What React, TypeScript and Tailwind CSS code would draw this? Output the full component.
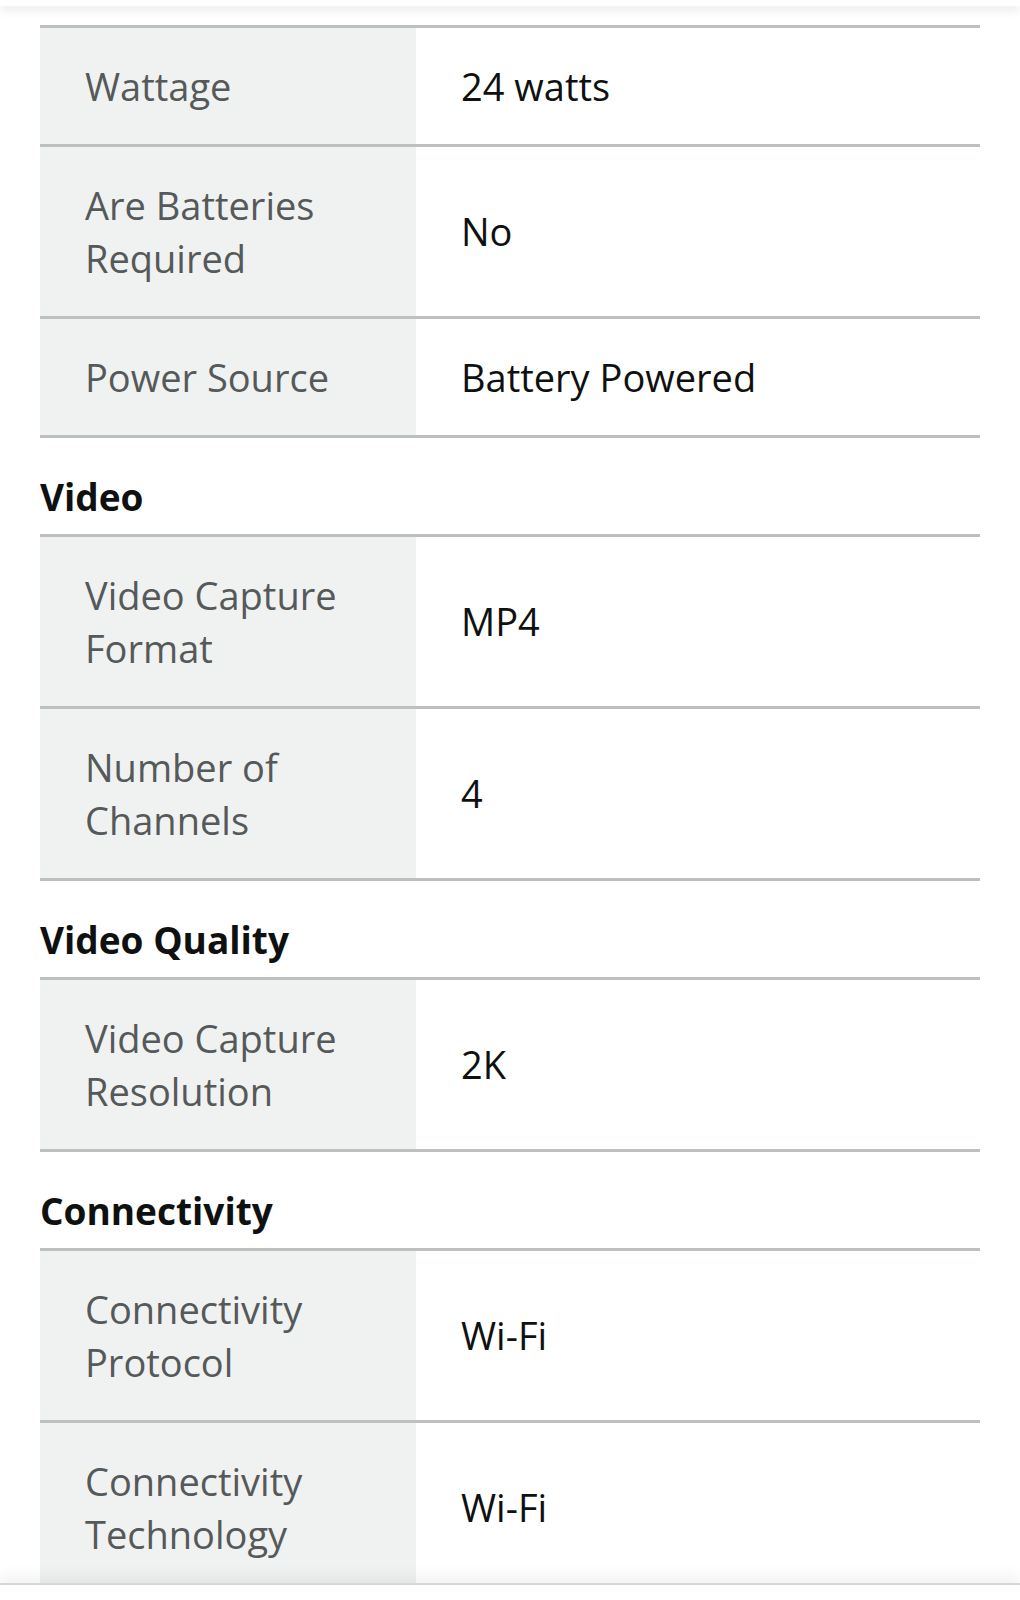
const sections: { title?: string; rows: [string, string][] }[] = [
  {
    rows: [
      ["Wattage", "24 watts"],
      ["Are Batteries Required", "No"],
      ["Power Source", "Battery Powered"],
    ],
  },
  {
    title: "Video",
    rows: [
      ["Video Capture Format", "MP4"],
      ["Number of Channels", "4"],
    ],
  },
  {
    title: "Video Quality",
    rows: [["Video Capture Resolution", "2K"]],
  },
  {
    title: "Connectivity",
    rows: [
      ["Connectivity Protocol", "Wi-Fi"],
      ["Connectivity Technology", "Wi-Fi"],
    ],
  },
];

const SpecRow = ({ label, value }: { label: string; value: string }) => (
  <div className="flex border-b-[3px] border-[#bdc0c0]">
    <div className="w-[376px] shrink-0 bg-[#f0f2f2] pl-[45px] pr-[50px] pt-[32px] pb-[31px] text-[#565959] text-[38px] leading-[53px]">
      {label}
    </div>
    <div className="flex-1 flex items-center pl-[45px] pr-4 text-[#0f1111] text-[38px] leading-[53px]">
      {value}
    </div>
  </div>
);

export default function App() {
  return (
    <div className="min-h-[1600px] bg-white" style={{ fontFamily: '"Open Sans", "Noto Sans", sans-serif' }}>
      {/* header overlay, with the scrolled-off "Power" title peeking out */}
      <div className="fixed top-0 left-0 right-0 h-[6px] bg-white/90 overflow-hidden shadow-[0_4px_10px_rgba(0,0,0,0.10)] z-10">
        <div className="pl-[40px] -mt-[34px] text-[37px] leading-[40px] font-bold text-[#c9cbcb]">Power</div>
      </div>

      <div className="px-[40px] pt-[25px] pb-[40px]">
        {sections.map((s, i) => (
          <div key={i}>
            {s.title && (
              <h2 className="pt-[38px] pb-[16px] text-[37px] leading-[42px] font-bold text-[#0f1111]">{s.title}</h2>
            )}
            <div className="border-t-[3px] border-[#bdc0c0]">
              {s.rows.map(([label, value]) => (
                <SpecRow key={label} label={label} value={value} />
              ))}
            </div>
          </div>
        ))}
      </div>

      {/* bottom bar overlay */}
      <div className="fixed bottom-0 left-0 right-0 h-[17px] bg-white border-t-2 border-[#d5d8da] shadow-[0_-8px_14px_rgba(0,0,0,0.05)] z-10" />
    </div>
  );
}
